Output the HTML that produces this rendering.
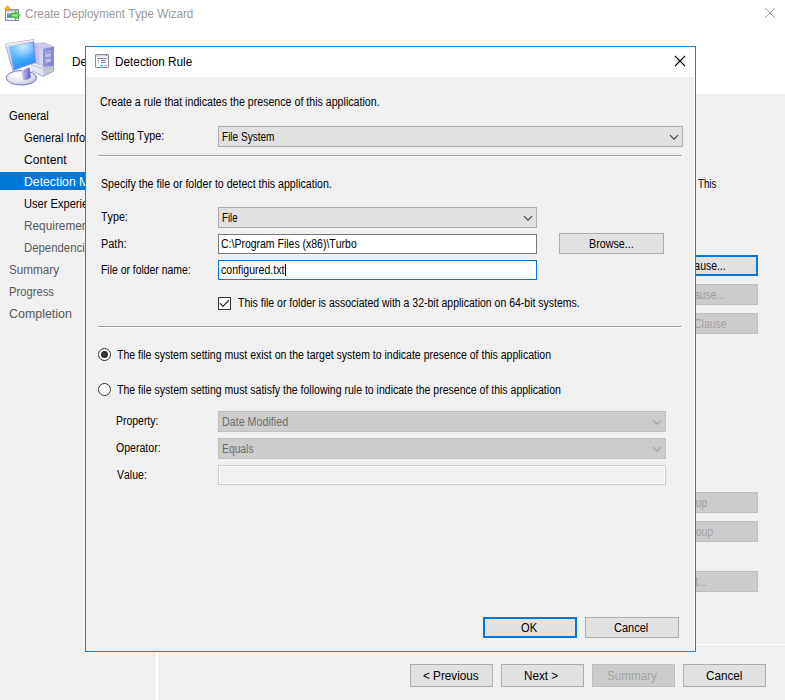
<!DOCTYPE html>
<html><head><meta charset="utf-8"><title>Create Deployment Type Wizard</title>
<style>
html,body{margin:0;padding:0;}
body{width:785px;height:700px;position:relative;overflow:hidden;background:#f0f0f0;font-family:"Liberation Sans", sans-serif;font-kerning:none;}
.r{position:absolute;}
.t{position:absolute;white-space:nowrap;transform-origin:0 0;}
</style></head><body>
<div class="r" style="left:0px;top:0px;width:785px;height:94px;background:#fff;"></div>
<div class="r" style="left:0px;top:94px;width:785px;height:606px;background:#f0f0f0;"></div>
<div class="r" style="left:0px;top:29px;width:62px;height:1px;background:linear-gradient(90deg,#f7f7f7,#f9f9f9 60%,#fff);"></div>
<svg class="r" style="left:3px;top:4px" width="20" height="18" viewBox="0 0 20 18">
<defs><linearGradient id="bq" x1="0" y1="0" x2="0" y2="1"><stop offset="0" stop-color="#86b8ec"/><stop offset="1" stop-color="#3a70c2"/></linearGradient></defs>
<rect x="2.500" y="5.500" width="13" height="11" fill="#fbfbfd" stroke="#8a8e98"/>
<rect x="3" y="6" width="12" height="1.600" fill="#bcc0d0"/>
<rect x="4.300" y="15" width="1.300" height=".8" fill="#b4c0d8"/><rect x="7.300" y="15" width="1.500" height=".8" fill="#b4c0d8"/>
<rect x="4" y="9.100" width="3.900" height="4.600" fill="url(#bq)"/>
<path d="M7.900 9.100h4.300V6.900l4.800 4.400-4.800 4.600v-2.300H7.900z" fill="#4cc838" stroke="#2aa818" stroke-width=".7" stroke-linejoin="round"/>
<path d="M9 10.400h4.200v-1l2 1.900-2 1.900v-1H9z" fill="#a4ec94"/>
<g fill="#f5a623" stroke="#e8961a" stroke-width=".3"><path d="M4.45 0.95L5.02 3.06L6.57 2.33L5.84 3.88L7.95 4.45L5.84 5.02L6.57 6.57L5.02 5.84L4.45 7.95L3.88 5.84L2.33 6.57L3.06 5.02L0.95 4.45L3.06 3.88L2.33 2.33L3.88 3.06z"/></g>
</svg>
<div class="t" style="left:25.22px;top:5.84px;font-size:12px;line-height:16px;color:#999;transform:scaleX(0.9669);">Create Deployment Type Wizard</div>
<svg class="r" style="left:764px;top:7px" width="12" height="12" viewBox="0 0 12 12"><path d="M1 1l10 10M11 1L1 11" stroke="#999" stroke-width="1" fill="none"/></svg>
<svg class="r" style="left:2px;top:34px" width="56" height="56" viewBox="0 0 56 56">
<defs>
<linearGradient id="scr" x1=".2" y1="0" x2=".6" y2="1"><stop offset="0" stop-color="#7cc8ff"/><stop offset=".45" stop-color="#55b4ff"/><stop offset="1" stop-color="#1c8cf8"/></linearGradient>
<radialGradient id="scrh" cx=".55" cy=".12" r=".5"><stop offset="0" stop-color="#d8f0ff" stop-opacity=".85"/><stop offset="1" stop-color="#d8f0ff" stop-opacity="0"/></radialGradient>
<linearGradient id="frm" x1="0" y1="0" x2="1" y2=".3"><stop offset="0" stop-color="#e6e6f6"/><stop offset=".6" stop-color="#b4b4e4"/><stop offset="1" stop-color="#6c6cc0"/></linearGradient>
<linearGradient id="twl" x1="0" y1="0" x2="1" y2="0"><stop offset="0" stop-color="#b4b4e6"/><stop offset="1" stop-color="#dcdcf6"/></linearGradient>
<linearGradient id="twr" x1="0" y1="0" x2="1" y2="0"><stop offset="0" stop-color="#9c9cdc"/><stop offset="1" stop-color="#7c7cc8"/></linearGradient>
<radialGradient id="bs" cx=".4" cy=".3" r=".75"><stop offset="0" stop-color="#ffffff"/><stop offset=".6" stop-color="#e4e4ee"/><stop offset="1" stop-color="#b8b8d4"/></radialGradient>
<linearGradient id="nk" x1="0" y1="0" x2="1" y2="0"><stop offset="0" stop-color="#d0d0f4"/><stop offset=".35" stop-color="#a8a8e6"/><stop offset="1" stop-color="#5c5cc6"/></linearGradient>
</defs>
<!-- tower -->
<path d="M32.400 9.600l10.400-.8 8.800 4-10.800 2z" fill="#ccccf0" stroke="#a0a0d8" stroke-width=".5"/>
<path d="M32.400 9.600l8.400 5.200v18.400l-8.400-3.600z" fill="url(#twl)"/>
<path d="M40.800 14.800l10.800-2v19l-10.800 1.400z" fill="url(#twr)"/>
<path d="M41.800 17l8.600-1.600v13.600l-8.600 1.400z" fill="#a4a4e0" stroke="#7070c0" stroke-width=".4"/>
<path d="M42.800 19.500l6.600-1.200v4.600l-6.600 1z" fill="#bcbcea" stroke="#6c6cbc" stroke-width=".5"/>
<path d="M42.800 25l6.600-1v4.400l-6.600 1z" fill="#bcbcea" stroke="#6c6cbc" stroke-width=".5"/>
<path d="M28.800 30.500l12 3.900v8l-11-5.600z" fill="#e6e6f6"/>
<path d="M40.800 34.400l10.800-2.400v5.200l-10.400 5.200z" fill="#c6c6de"/>
<path d="M29 30.400l11.800 3.900 10.800-2.400" fill="none" stroke="#8080c4" stroke-width=".6"/>
<path d="M29.800 36.800l11.400 5.600 10.400-5.200" fill="none" stroke="#8c8cc0" stroke-width=".7"/>
<path d="M51.600 12.800v24.400" stroke="#7474bc" stroke-width=".6"/>
<rect x="47.700" y="33.900" width="1.500" height="2" fill="#6ee84e"/>
<!-- base -->
<ellipse cx="19.400" cy="43.800" rx="15.200" ry="7.300" fill="url(#bs)" stroke="#6c6cb4" stroke-width=".9"/>
<!-- neck -->
<path d="M19.200 36.400l8.400-3.200 1.200 10c-1.500 2.200-5.500 3.200-7.600 2.800z" fill="url(#nk)"/>
<!-- monitor -->
<path d="M3.200 10l28.400-4.400 2 22.800-22.800 8.400z" fill="url(#frm)" stroke="#8c8ccc" stroke-width=".6"/>
<path d="M3.400 10l28.200-4.300.2 1.700-27.800 4.600z" fill="#f0f0f6"/>
<path d="M6.800 12.800l23.600-4.400 2.800 19.200-21.200 8.400z" fill="url(#scr)"/>
<path d="M6.800 12.800l23.600-4.400 2.800 19.200-21.200 8.400z" fill="url(#scrh)"/>
</svg>
<div class="t" style="left:71.86px;top:53.84px;font-size:12px;line-height:16px;color:#000;transform:scaleX(0.9800);">Detection Method</div>
<div class="r" style="left:0px;top:172px;width:156px;height:18px;background:#0078d7;"></div>
<div class="t" style="left:9.24px;top:107.84px;font-size:12px;line-height:16px;color:#000;transform:scaleX(0.9327);">General</div>
<div class="t" style="left:23.95px;top:129.84px;font-size:12px;line-height:16px;color:#000;transform:scaleX(0.9250);">General Information</div>
<div class="t" style="left:24.09px;top:151.84px;font-size:12px;line-height:16px;color:#000;transform:scaleX(1.0150);">Content</div>
<div class="t" style="left:24.02px;top:173.84px;font-size:12px;line-height:16px;color:#fff;transform:scaleX(1.0200);">Detection Method</div>
<div class="t" style="left:23.87px;top:195.84px;font-size:12px;line-height:16px;color:#000;transform:scaleX(0.9250);">User Experience</div>
<div class="t" style="left:23.85px;top:217.84px;font-size:12px;line-height:16px;color:#595959;transform:scaleX(0.9850);">Requirements</div>
<div class="t" style="left:24.09px;top:239.84px;font-size:12px;line-height:16px;color:#595959;transform:scaleX(0.9470);">Dependencies</div>
<div class="t" style="left:9.07px;top:261.84px;font-size:12px;line-height:16px;color:#595959;transform:scaleX(0.9760);">Summary</div>
<div class="t" style="left:8.70px;top:283.84px;font-size:12px;line-height:16px;color:#595959;transform:scaleX(0.9352);">Progress</div>
<div class="t" style="left:8.98px;top:305.84px;font-size:12px;line-height:16px;color:#595959;transform:scaleX(1.0368);">Completion</div>
<div class="r" style="left:156px;top:94px;width:2px;height:606px;background:#fff;"></div>
<div class="r" style="left:158px;top:644px;width:627px;height:1px;background:#fff;"></div>
<div class="t" style="left:698.01px;top:175.84px;font-size:12px;line-height:16px;color:#000;transform:scaleX(0.8060);">This</div>
<div class="r" style="left:638px;top:255px;width:120px;height:21px;background:#e1e1e1;border:2px solid #0078d7;box-sizing:border-box;"></div>
<div class="t" style="left:662.75px;top:257.84px;font-size:12px;line-height:16px;color:#000;transform:scaleX(0.8700);">Add Clause...</div>
<div class="r" style="left:638px;top:284px;width:120px;height:21px;background:#cccccc;border:1px solid #bfbfbf;box-sizing:border-box;"></div>
<div class="t" style="left:663.33px;top:286.84px;font-size:12px;line-height:16px;color:#a0a0a0;transform:scaleX(0.8700);">Edit Clause...</div>
<div class="r" style="left:638px;top:313px;width:120px;height:21px;background:#cccccc;border:1px solid #bfbfbf;box-sizing:border-box;"></div>
<div class="t" style="left:661.31px;top:315.84px;font-size:12px;line-height:16px;color:#a0a0a0;transform:scaleX(0.8700);">Delete Clause</div>
<div class="r" style="left:638px;top:492px;width:120px;height:21px;background:#cccccc;border:1px solid #bfbfbf;box-sizing:border-box;"></div>
<div class="t" style="left:678.09px;top:494.84px;font-size:12px;line-height:16px;color:#a0a0a0;transform:scaleX(0.8700);">Group</div>
<div class="r" style="left:638px;top:521px;width:120px;height:21px;background:#cccccc;border:1px solid #bfbfbf;box-sizing:border-box;"></div>
<div class="t" style="left:673.43px;top:523.84px;font-size:12px;line-height:16px;color:#a0a0a0;transform:scaleX(0.8700);">Ungroup</div>
<div class="r" style="left:638px;top:571px;width:120px;height:21px;background:#cccccc;border:1px solid #bfbfbf;box-sizing:border-box;"></div>
<div class="t" style="left:680.47px;top:573.84px;font-size:12px;line-height:16px;color:#a0a0a0;transform:scaleX(0.8700);">Edit...</div>
<div class="r" style="left:410px;top:664px;width:83px;height:23px;background:#e1e1e1;border:1px solid #adadad;box-sizing:border-box;"></div>
<div class="t" style="left:423.31px;top:667.84px;font-size:12px;line-height:16px;color:#000;transform:scaleX(0.9771);">&lt; Previous</div>
<div class="r" style="left:501px;top:664px;width:83px;height:23px;background:#e1e1e1;border:1px solid #adadad;box-sizing:border-box;"></div>
<div class="t" style="left:523.87px;top:667.84px;font-size:12px;line-height:16px;color:#000;transform:scaleX(0.9737);">Next &gt;</div>
<div class="r" style="left:592px;top:664px;width:83px;height:23px;background:#cccccc;border:1px solid #bfbfbf;box-sizing:border-box;"></div>
<div class="t" style="left:607.38px;top:667.84px;font-size:12px;line-height:16px;color:#a0a0a0;transform:scaleX(0.9681);">Summary</div>
<div class="r" style="left:683px;top:664px;width:83px;height:23px;background:#e1e1e1;border:1px solid #adadad;box-sizing:border-box;"></div>
<div class="t" style="left:705.92px;top:667.84px;font-size:12px;line-height:16px;color:#000;transform:scaleX(0.9727);">Cancel</div>
<div class="r" style="left:85px;top:46px;width:611px;height:606px;background:#f0f0f0;border:1px solid #1883d7;box-sizing:border-box;"></div>
<div class="r" style="left:86px;top:47px;width:609px;height:30px;background:#fff;"></div>
<div class="r" style="left:694px;top:77px;width:1px;height:574px;background:#fafafa;"></div>
<svg class="r" style="left:95px;top:54px" width="14" height="14" viewBox="0 0 14 14">
<rect x=".5" y=".5" width="13" height="13" rx=".6" fill="#fdfdfd" stroke="#84868c"/>
<rect x="1" y="1" width="12" height="1.500" fill="#d2d6da"/>
<rect x="11" y="1" width="1" height="1" fill="#5c7cac"/>
<rect x="2.200" y="4" width="9.800" height="1" fill="#8c7eaa"/>
<rect x="3" y="6" width="1.100" height="1" fill="#8c7eaa"/><rect x="6" y="6" width="5" height="1" fill="#8c7eaa"/>
<rect x="3" y="8" width="1.100" height="1" fill="#8c7eaa"/><rect x="6" y="8" width="5" height="1" fill="#8c7eaa"/>
<rect x="5" y="11" width="3" height="1.200" fill="#1ec4ff"/><rect x="9.100" y="11" width="2.900" height="1.200" fill="#b4b4b8"/>
</svg>
<div class="t" style="left:114.96px;top:54.34px;font-size:12px;line-height:16px;color:#000;transform:scaleX(0.9818);">Detection Rule</div>
<svg class="r" style="left:674px;top:55px" width="12" height="12" viewBox="0 0 12 12"><path d="M1 1l10 10M11 1L1 11" stroke="#000" stroke-width="1.100" fill="none"/></svg>
<div class="t" style="left:100.47px;top:93.84px;font-size:12px;line-height:16px;color:#000;transform:scaleX(0.8861);">Create a rule that indicates the presence of this application.</div>
<div class="t" style="left:101.02px;top:127.84px;font-size:12px;line-height:16px;color:#000;transform:scaleX(0.8928);">Setting Type:</div>
<div class="r" style="left:218px;top:126px;width:465px;height:21px;background:#e1e1e1;border:1px solid #adadad;box-sizing:border-box;"></div>
<div class="t" style="left:221.80px;top:128.84px;font-size:12px;line-height:16px;color:#000;transform:scaleX(0.8374);">File System</div>
<svg class="r" style="left:669px;top:133.6px" width="10" height="7" viewBox="0 0 10 7"><path d="M1 1.200l4 4 4-4" stroke="#404040" stroke-width="1.100" fill="none"/></svg>
<div class="r" style="left:98px;top:155px;width:585px;height:1px;background:#a0a0a0;"></div>
<div class="r" style="left:98px;top:156px;width:585px;height:1px;background:#fff;"></div>
<div class="r" style="left:682px;top:155px;width:1px;height:2px;background:#fff;"></div>
<div class="t" style="left:101.32px;top:175.84px;font-size:12px;line-height:16px;color:#000;transform:scaleX(0.8848);">Specify the file or folder to detect this application.</div>
<div class="t" style="left:101.39px;top:208.84px;font-size:12px;line-height:16px;color:#000;transform:scaleX(0.8945);">Type:</div>
<div class="r" style="left:218px;top:207px;width:319px;height:21px;background:#e1e1e1;border:1px solid #adadad;box-sizing:border-box;"></div>
<div class="t" style="left:221.83px;top:209.84px;font-size:12px;line-height:16px;color:#000;transform:scaleX(0.8052);">File</div>
<svg class="r" style="left:523px;top:214.6px" width="10" height="7" viewBox="0 0 10 7"><path d="M1 1.200l4 4 4-4" stroke="#404040" stroke-width="1.100" fill="none"/></svg>
<div class="t" style="left:100.73px;top:235.84px;font-size:12px;line-height:16px;color:#000;transform:scaleX(0.9105);">Path:</div>
<div class="r" style="left:218px;top:234px;width:319px;height:20px;background:#fff;border:1px solid #7a7a7a;box-sizing:border-box;"></div>
<div class="t" style="left:220.78px;top:235.84px;font-size:12px;line-height:16px;color:#000;transform:scaleX(0.8735);">C:\Program Files (x86)\Turbo</div>
<div class="r" style="left:559px;top:233px;width:105px;height:21px;background:#e1e1e1;border:1px solid #adadad;box-sizing:border-box;"></div>
<div class="t" style="left:588.64px;top:235.84px;font-size:12px;line-height:16px;color:#000;transform:scaleX(0.8928);">Browse...</div>
<div class="t" style="left:100.77px;top:261.84px;font-size:12px;line-height:16px;color:#000;transform:scaleX(0.8669);">File or folder name:</div>
<div class="r" style="left:218px;top:260px;width:319px;height:20px;background:#fff;border:1px solid #0078d7;box-sizing:border-box;"></div>
<div class="t" style="left:220.88px;top:261.84px;font-size:12px;line-height:16px;color:#000;transform:scaleX(0.8802);">configured.txt</div>
<div class="r" style="left:285px;top:264px;width:1px;height:12px;background:#000;"></div>
<div class="r" style="left:218px;top:297px;width:13px;height:13px;background:#fff;border:1px solid #333;box-sizing:border-box;"></div>
<svg class="r" style="left:218px;top:297px" width="13" height="13" viewBox="0 0 13 13"><path d="M1.900 6.300L4.900 9.400L10.900 3.300" stroke="#333" stroke-width="1.250" fill="none"/></svg>
<div class="t" style="left:237.59px;top:294.84px;font-size:12px;line-height:16px;color:#000;transform:scaleX(0.8742);">This file or folder is associated with a 32-bit application on 64-bit systems.</div>
<div class="r" style="left:98px;top:326px;width:585px;height:1px;background:#a0a0a0;"></div>
<div class="r" style="left:98px;top:327px;width:585px;height:1px;background:#fff;"></div>
<div class="r" style="left:682px;top:326px;width:1px;height:2px;background:#fff;"></div>
<svg class="r" style="left:98px;top:348px" width="13" height="13" viewBox="0 0 13 13"><circle cx="6.500" cy="6.500" r="6" fill="#fff" stroke="#333" stroke-width="1"/><circle cx="6.500" cy="6.500" r="3.500" fill="#333"/></svg>
<div class="t" style="left:117.39px;top:346.84px;font-size:12px;line-height:16px;color:#000;transform:scaleX(0.8757);">The file system setting must exist on the target system to indicate presence of this application</div>
<svg class="r" style="left:98px;top:383px" width="13" height="13" viewBox="0 0 13 13"><circle cx="6.500" cy="6.500" r="6" fill="#fff" stroke="#333" stroke-width="1"/></svg>
<div class="t" style="left:117.39px;top:381.84px;font-size:12px;line-height:16px;color:#000;transform:scaleX(0.8767);">The file system setting must satisfy the following rule to indicate the presence of this application</div>
<div class="t" style="left:115.86px;top:412.84px;font-size:12px;line-height:16px;color:#000;transform:scaleX(0.8709);">Property:</div>
<div class="r" style="left:218px;top:411px;width:448px;height:21px;background:#cccccc;border:1px solid #bfbfbf;box-sizing:border-box;"></div>
<div class="t" style="left:221.74px;top:413.84px;font-size:12px;line-height:16px;color:#6d6d6d;transform:scaleX(0.8929);">Date Modified</div>
<svg class="r" style="left:652px;top:418.6px" width="10" height="7" viewBox="0 0 10 7"><path d="M1 1.200l4 4 4-4" stroke="#a0a0a0" stroke-width="1.100" fill="none"/></svg>
<div class="t" style="left:115.52px;top:439.84px;font-size:12px;line-height:16px;color:#000;transform:scaleX(0.8802);">Operator:</div>
<div class="r" style="left:218px;top:438px;width:448px;height:21px;background:#cccccc;border:1px solid #bfbfbf;box-sizing:border-box;"></div>
<div class="t" style="left:221.77px;top:440.84px;font-size:12px;line-height:16px;color:#6d6d6d;transform:scaleX(0.8603);">Equals</div>
<svg class="r" style="left:652px;top:445.6px" width="10" height="7" viewBox="0 0 10 7"><path d="M1 1.200l4 4 4-4" stroke="#a0a0a0" stroke-width="1.100" fill="none"/></svg>
<div class="t" style="left:116.65px;top:466.84px;font-size:12px;line-height:16px;color:#000;transform:scaleX(0.8761);">Value:</div>
<div class="r" style="left:218px;top:465px;width:448px;height:20px;background:#f0f0f0;border:1px solid #cccccc;box-sizing:border-box;box-shadow:inset 0 0 0 1px #fff;"></div>
<div class="r" style="left:483px;top:617px;width:94px;height:21px;background:#e1e1e1;border:2px solid #0078d7;box-sizing:border-box;"></div>
<div class="t" style="left:521.00px;top:619.84px;font-size:12px;line-height:16px;color:#000;transform:scaleX(0.9293);">OK</div>
<div class="r" style="left:585px;top:617px;width:94px;height:21px;background:#e1e1e1;border:1px solid #adadad;box-sizing:border-box;"></div>
<div class="t" style="left:614.05px;top:619.84px;font-size:12px;line-height:16px;color:#000;transform:scaleX(0.9169);">Cancel</div>
</body></html>
